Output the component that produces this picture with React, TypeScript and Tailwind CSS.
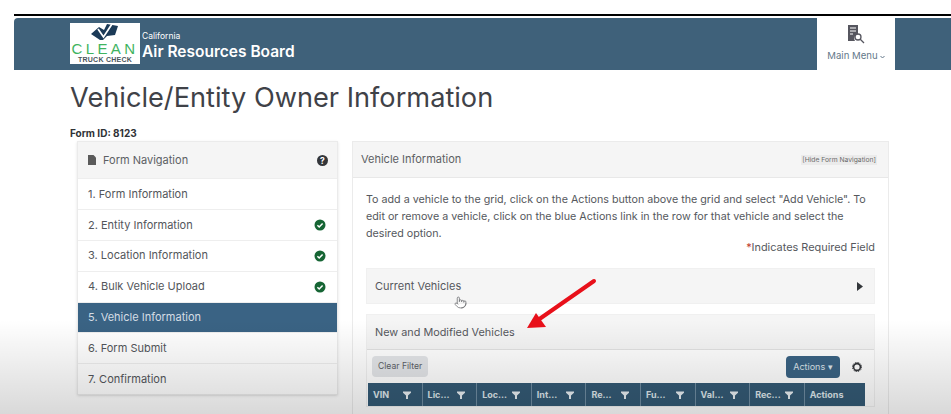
import { Pointer } from "lucide-react";

const font = { fontFamily: '"Inter", "Liberation Sans", sans-serif' };

function Check() {
  return (
    <svg width="12" height="12" viewBox="0 0 12 12">
      <circle cx="6" cy="6" r="5.5" fill="#166534" />
      <path d="M3.4 6.2 5.2 8l3.4-3.6" fill="none" stroke="#fff" strokeWidth="1.5" />
    </svg>
  );
}

function Funnel() {
  return (
    <svg width="8" height="8" viewBox="0 0 8 8">
      <path d="M0 0.5h8v1.2L5 4.4V8H3V4.4L0 1.7z" fill="#e8eef2" />
    </svg>
  );
}

const navItems = [
  { t: "1. Form Information" },
  { t: "2. Entity Information", c: true },
  { t: "3. Location Information", c: true },
  { t: "4. Bulk Vehicle Upload", c: true },
  { t: "5. Vehicle Information", a: true },
  { t: "6. Form Submit" },
  { t: "7. Confirmation" },
];

const cols = ["VIN", "Lic...", "Loc...", "Int...", "Re...", "Fu...", "Val...", "Rec..."];

export default function App() {
  return (
    <div className="relative h-[414px] w-[951px] overflow-hidden bg-white text-[#4b5563]" style={font}>
      <div className="ml-[14px] mt-[14px] h-[2px] bg-black" />
      <header className="ml-[14px] mt-[2px] flex h-[52px] items-stretch rounded-tl-sm bg-[#3f617a] pl-[56px]">
        <div className="mt-[5px] flex h-[41px] w-[70px] flex-col items-center bg-white">
          <svg width="30" height="18" viewBox="0 0 30 18" className="shrink-0">
            <path d="M1 11 9 4l5 3 3-6 11 2-3 9-8 1-4 4-3 0z" fill="#1b3a57" />
            <path d="M8 6l5.5 8L22 1" fill="none" stroke="#fff" strokeWidth="1.7" />
          </svg>
          <div className="text-[15px] leading-[15px] tracking-[3.4px] text-[#3fb45f]" style={{ fontFamily: '"Liberation Sans", sans-serif' }}>CLEAN</div>
          <div className="w-[68px] text-center text-[7px] font-bold leading-[8px] tracking-[0.25px] text-[#4a555c]" style={{ fontFamily: '"Liberation Sans", sans-serif' }}>TRUCK CHECK</div>
        </div>
        <div className="ml-[2px] flex flex-col pt-[12px] text-white">
          <div className="text-[8.5px] leading-[12px]">California</div>
          <div className="text-[15.5px] font-semibold leading-[20px]">Air Resources Board</div>
        </div>
        <div className="ml-auto mr-[56px] flex w-[78px] flex-col items-center bg-white pt-[7px]">
          <svg width="18" height="19" viewBox="0 0 18 19">
            <path d="M1 0h10v9a4.5 4.5 0 0 0-3 7H1z" fill="#56565f" />
            <path d="M3 3h6M3 6h6M3 9h3" stroke="#fff" strokeWidth="1.2" />
            <circle cx="11" cy="12" r="3" fill="none" stroke="#56565f" strokeWidth="1.3" />
            <path d="M13 14l4 4" stroke="#56565f" strokeWidth="1.3" />
          </svg>
          <div className="mt-[5px] flex items-center text-[9.6px] leading-[14px] text-[#64788a]">
            Main Menu
            <svg width="5" height="4" viewBox="0 0 5 4" className="ml-[2px] mt-px"><path d="M.5 1 2.5 3 4.5 1" fill="none" stroke="#64788a" /></svg>
          </div>
        </div>
      </header>

      <h1 className="ml-[70px] mt-[9px] text-[27.2px] font-normal leading-[38px] text-[#3f4248]">Vehicle/Entity Owner Information</h1>
      <div className="ml-[70px] mt-[9px] text-[10px] font-bold leading-[14px] text-[#2f3236]">Form ID: 8123</div>

      <div className="ml-[77px] mr-[62px] mt-[1px] flex items-start gap-[14px]">
        <aside className="w-[261px] shrink-0 border border-[#ebebeb] shadow-sm">
          <div className="flex h-[36px] items-center bg-[#f5f5f5] pl-[10px] pr-[9px]">
            <svg width="8" height="10" viewBox="0 0 8 10">
              <path d="M0 0h5.5L8 2.5V10H0z" fill="#5b5b5b" />
            </svg>
            <span className="ml-[7px] text-[11px] text-[#5c5f64]">Form Navigation</span>
            <svg width="11" height="11" viewBox="0 0 11 11" className="ml-auto">
              <circle cx="5.5" cy="5.5" r="5.5" fill="#33363a" />
              <text x="5.5" y="8.6" textAnchor="middle" fontSize="8.5" fontWeight="700" fill="#fff">?</text>
            </svg>
          </div>
          {navItems.map((n) => (
            <div
              key={n.t}
              className={
                "flex h-[30.9px] items-center justify-between border-t border-[#eeeeee] pl-[10px] pr-[11px] text-[11px] " +
                (n.a ? "bg-[#3a6384] text-[#d5dde4]" : "text-[#53565b]")
              }
            >
              <span>{n.t}</span>
              {n.c && <Check />}
            </div>
          ))}
        </aside>

        <main className="h-[300px] flex-1 border border-[#ebebeb]">
          <div className="flex h-[36px] items-center justify-between border-b border-[#e8e8e8] bg-[#f5f5f5] pl-[8px] pr-[11px]">
            <span className="text-[11px] text-[#5c5f64]">Vehicle Information</span>
            <span className="bg-[#ebebeb] px-[1px] text-[6.75px] leading-[10px] text-[#6b6b6b]">[Hide Form Navigation]</span>
          </div>
          <div className="px-[13px]">
            <p className="mt-[13px] text-[10.73px] leading-[17px] text-[#55585d]">
              To add a vehicle to the grid, click on the Actions button above the grid and select "Add Vehicle". To edit or remove a vehicle, click on the blue Actions link in the row for that vehicle and select the desired option.
            </p>
            <div className="mt-[-2px] text-right text-[10.9px] leading-[15px] text-[#55585d]">
              <span className="text-[#c0392b]">*</span>Indicates Required Field
            </div>
            <div className="mt-[13px] flex h-[36px] items-center justify-between border border-[#f0f0f0] bg-[#f5f5f5] pl-[8px] pr-[11px]">
              <span className="text-[11px] text-[#55585d]">Current Vehicles</span>
              <svg width="6" height="9" viewBox="0 0 6 9"><path d="M0 0l6 4.5L0 9z" fill="#33363a" /></svg>
            </div>
            <div className="mt-[10px] border border-[#f0f0f0]">
              <div className="flex h-[35px] items-center border-b border-[#e2e2e2] bg-[#f5f5f5] pl-[8px]">
                <span className="text-[10.85px] text-[#55585d]">New and Modified Vehicles</span>
              </div>
              <div className="flex h-[33px] items-center justify-between pl-[5px] pr-[9px]">
                <button className="h-[21px] rounded-sm bg-[#e3e5e8] px-[6px] text-[8.6px] text-[#5c6066]">Clear Filter</button>
                <div className="flex items-center">
                  <button className="h-[22px] w-[54px] rounded-sm bg-[#3a6384] text-[9px] text-[#dde5eb]">Actions ▾</button>
                  <svg width="10" height="10" viewBox="0 0 10 10" className="ml-[12px] mr-[3px]">
                    <circle cx="5" cy="5" r="3.4" fill="none" stroke="#33363a" strokeWidth="1.6" />
                    <circle cx="5" cy="5" r="4.6" fill="none" stroke="#33363a" strokeWidth="1" strokeDasharray="1.3 1.1" />
                  </svg>
                </div>
              </div>
              <div className="flex h-[23px]">
                <div className="ml-[1px] flex w-[497px] bg-[#345a75] text-[9px] font-bold text-[#dfe7ec]">
                  {cols.map((c) => (
                    <div key={c} className="flex w-[54.6px] items-center justify-between border-r border-[#6f8ca1] pl-[5px] pr-[11px]">
                      <span>{c}</span>
                      <Funnel />
                    </div>
                  ))}
                  <div className="flex flex-1 items-center pl-[5px]">Actions</div>
                </div>
              </div>
            </div>
          </div>
        </main>
      </div>

      <div className="pointer-events-none absolute bottom-0 left-0 h-[94px] w-full bg-gradient-to-b from-transparent to-black/15" />
      <Pointer className="absolute left-[454px] top-[296px] text-[#77797c]" size={13} strokeWidth={1.6} />
      <svg className="pointer-events-none absolute left-[520px] top-[275px]" width="80" height="58" viewBox="0 0 80 58">
        <path d="M74 6 18 45" stroke="#e8101a" strokeWidth="4" strokeLinecap="round" />
        <path d="M7 53 16 38 26 52z" fill="#e8101a" />
      </svg>
    </div>
  );
}
